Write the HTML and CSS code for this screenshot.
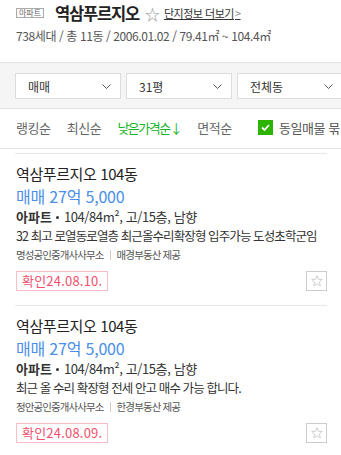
FILE: index.html
```html
<!DOCTYPE html>
<html lang="ko">
<head>
    <meta charset="UTF-8">
    <meta name="viewport" content="width=device-width, initial-scale=1.0">
    <title>역삼푸르지오 매물</title>
    <link rel="stylesheet" href="styles.css">
</head>
<body>
    <div class="complex">
        <div class="complex-title">
            <span class="type-badge">아파트</span>
            <h1>역삼푸르지오</h1>
            <span class="fav">☆</span>
            <a class="more" href="#">단지정보 더보기<span class="gt">&gt;</span></a>
        </div>
        <div class="complex-info">738세대 / 총 11동 / 2006.01.02 / 79.41㎡ ~ 104.4㎡</div>
    </div>

    <div class="filters">
        <div class="select"><span>매매</span><svg class="chev" width="9" height="5" viewBox="0 0 9 5"><path d="M0.5 0.5 L4.5 4.5 L8.5 0.5" fill="none" stroke="#555" stroke-width="1"/></svg></div>
        <div class="select"><span>31평</span><svg class="chev" width="9" height="5" viewBox="0 0 9 5"><path d="M0.5 0.5 L4.5 4.5 L8.5 0.5" fill="none" stroke="#555" stroke-width="1"/></svg></div>
        <div class="select"><span>전체동</span><svg class="chev" width="9" height="5" viewBox="0 0 9 5"><path d="M0.5 0.5 L4.5 4.5 L8.5 0.5" fill="none" stroke="#555" stroke-width="1"/></svg></div>
    </div>

    <div class="sort">
        <a href="#">랭킹순</a>
        <span class="bar"></span>
        <a href="#">최신순</a>
        <span class="bar"></span>
        <a href="#" class="on">낮은가격순↓</a>
        <span class="bar"></span>
        <a href="#">면적순</a>
        <label class="group">
            <span class="check"><svg width="9" height="7" viewBox="0 0 9 7"><path d="M1 3.5 L3.5 6 L8 1" fill="none" stroke="#fff" stroke-width="1.8"/></svg></span>
            동일매물 묶기
        </label>
    </div>

    <div class="list">
        <div class="item">
            <div class="item-title">역삼푸르지오 104동</div>
            <div class="price">매매 27억 5,000</div>
            <div class="spec"><strong>아파트</strong><span class="dot"></span><span>104/84m², 고/15층, 남향</span></div>
            <div class="desc">32 최고 로열동로열층 최근올수리확장형 입주가능 도성초학군임</div>
            <div class="agent">명성공인중개사사무소<span class="bar"></span>매경부동산 제공</div>
            <div class="item-foot">
                <span class="confirm">확인24.08.10.</span>
                <span class="star-btn"><svg width="12" height="12" viewBox="0 0 12 12"><path d="M6 0.8 L7.5 4.3 L11.3 4.5 L8.4 7 L9.3 10.8 L6 8.8 L2.7 10.8 L3.6 7 L0.7 4.5 L4.5 4.3 Z" fill="none" stroke="#c8c8c8" stroke-width="0.9"/></svg></span>
            </div>
        </div>
        <div class="item">
            <div class="item-title">역삼푸르지오 104동</div>
            <div class="price">매매 27억 5,000</div>
            <div class="spec"><strong>아파트</strong><span class="dot"></span><span>104/84m², 고/15층, 남향</span></div>
            <div class="desc">최근 올 수리 확장형 전세 안고 매수 가능 합니다.</div>
            <div class="agent">정안공인중개사사무소<span class="bar"></span>한경부동산 제공</div>
            <div class="item-foot">
                <span class="confirm">확인24.08.09.</span>
                <span class="star-btn"><svg width="12" height="12" viewBox="0 0 12 12"><path d="M6 0.8 L7.5 4.3 L11.3 4.5 L8.4 7 L9.3 10.8 L6 8.8 L2.7 10.8 L3.6 7 L0.7 4.5 L4.5 4.3 Z" fill="none" stroke="#c8c8c8" stroke-width="0.9"/></svg></span>
            </div>
        </div>
    </div>
</body>
</html>
```

FILE: styles.css
```css
* {
    margin: 0;
    padding: 0;
    box-sizing: border-box;
    font-family: "Noto Sans CJK KR", "Noto Sans", sans-serif;
}

body {
    width: 341px;
    height: 455px;
    overflow: hidden;
    background: #fff;
    color: #222;
}

a {
    color: inherit;
    text-decoration: none;
}

.complex {
    padding: 1px 16px 0;
    height: 62px;
}

.complex-title {
    display: flex;
    align-items: center;
    height: 24px;
    white-space: nowrap;
}

.type-badge {
    display: inline-block;
    border: 1px solid #aaa;
    color: #666;
    font-size: 8px;
    line-height: 8px;
    padding: 0 2px;
    margin-right: 11px;
}

h1 {
    font-size: 16.5px;
    font-weight: 700;
    color: #222;
    letter-spacing: -1.2px;
}

.fav {
    color: #999;
    font-size: 15px;
    margin: 0 4px 0 6px;
}

.more {
    font-size: 11px;
    color: #333;
    text-decoration: underline;
    letter-spacing: -0.5px;
}

.more .gt {
    color: #888;
    margin-left: 1px;
}

.complex-info {
    margin-top: 2px;
    font-size: 12px;
    color: #555;
    letter-spacing: -0.4px;
    white-space: nowrap;
}

.filters {
    display: flex;
    gap: 5px;
    height: 47px;
    padding: 10px 0 0 15px;
    background: #f5f5f5;
    border-top: 1px solid #e4e4e4;
    border-bottom: 1px solid #e4e4e4;
    overflow: hidden;
}

.select {
    flex: 0 0 106px;
    height: 26px;
    display: flex;
    align-items: center;
    justify-content: space-between;
    padding: 0 9px 0 12px;
    background: #fff;
    border: 1px solid #ddd;
    font-size: 12px;
    color: #333;
}

.sort {
    display: flex;
    align-items: center;
    height: 40px;
    padding: 0 0 2px 16px;
    border-bottom: 1px solid #e4e4e4;
    white-space: nowrap;
    overflow: hidden;
    font-size: 13px;
    color: #666;
    letter-spacing: -0.4px;
}

.sort .bar {
    width: 1px;
    height: 10px;
    background: #ddd;
    margin: 0 8px;
}

.sort .on {
    color: #16b42b;
    letter-spacing: -1.5px;
}

.group {
    display: flex;
    align-items: center;
    margin-left: 26px;
    color: #555;
}

.check {
    display: flex;
    align-items: center;
    justify-content: center;
    width: 15px;
    height: 15px;
    background: #2db400;
    margin-right: 6px;
}

.list {
    padding: 0 14px 0 15px;
}

.item {
    border-top: 1px solid #e8e8e8;
    margin-top: 4px;
    padding: 10px 0 0 1px;
    height: 152px;
}

.item + .item {
    margin-top: 0;
}

.item-title {
    font-size: 15px;
    line-height: 19px;
    color: #222;
    letter-spacing: -0.4px;
}

.price {
    margin-top: 1px;
    font-size: 16px;
    line-height: 24px;
    color: #4a8ee8;
    letter-spacing: -0.2px;
}

.spec {
    display: flex;
    align-items: center;
    font-size: 13px;
    line-height: 18px;
    color: #333;
    letter-spacing: -0.4px;
}

.spec strong {
    font-weight: 700;
    letter-spacing: 0;
}

.spec .dot {
    width: 3px;
    height: 3px;
    border-radius: 50%;
    background: #333;
    margin: 1px 5px 0 4px;
}

.desc {
    font-size: 12.5px;
    line-height: 19px;
    color: #333;
    letter-spacing: -0.9px;
    white-space: nowrap;
}

.agent {
    display: flex;
    align-items: center;
    margin-top: 1px;
    font-size: 10.5px;
    line-height: 18px;
    color: #555;
    letter-spacing: -0.9px;
}

.agent .bar {
    width: 1px;
    height: 10px;
    background: #ccc;
    margin: 0 6px;
}

.item-foot {
    display: flex;
    justify-content: space-between;
    align-items: center;
    margin-top: 7px;
}

.confirm {
    height: 20px;
    line-height: 18px;
    padding: 0 5px;
    border: 1px solid #fbbdc7;
    color: #f2506b;
    font-size: 13px;
    letter-spacing: 0.2px;
}

.star-btn {
    display: flex;
    align-items: center;
    justify-content: center;
    width: 21px;
    height: 20px;
    border: 1px solid #ccc;
}
```
